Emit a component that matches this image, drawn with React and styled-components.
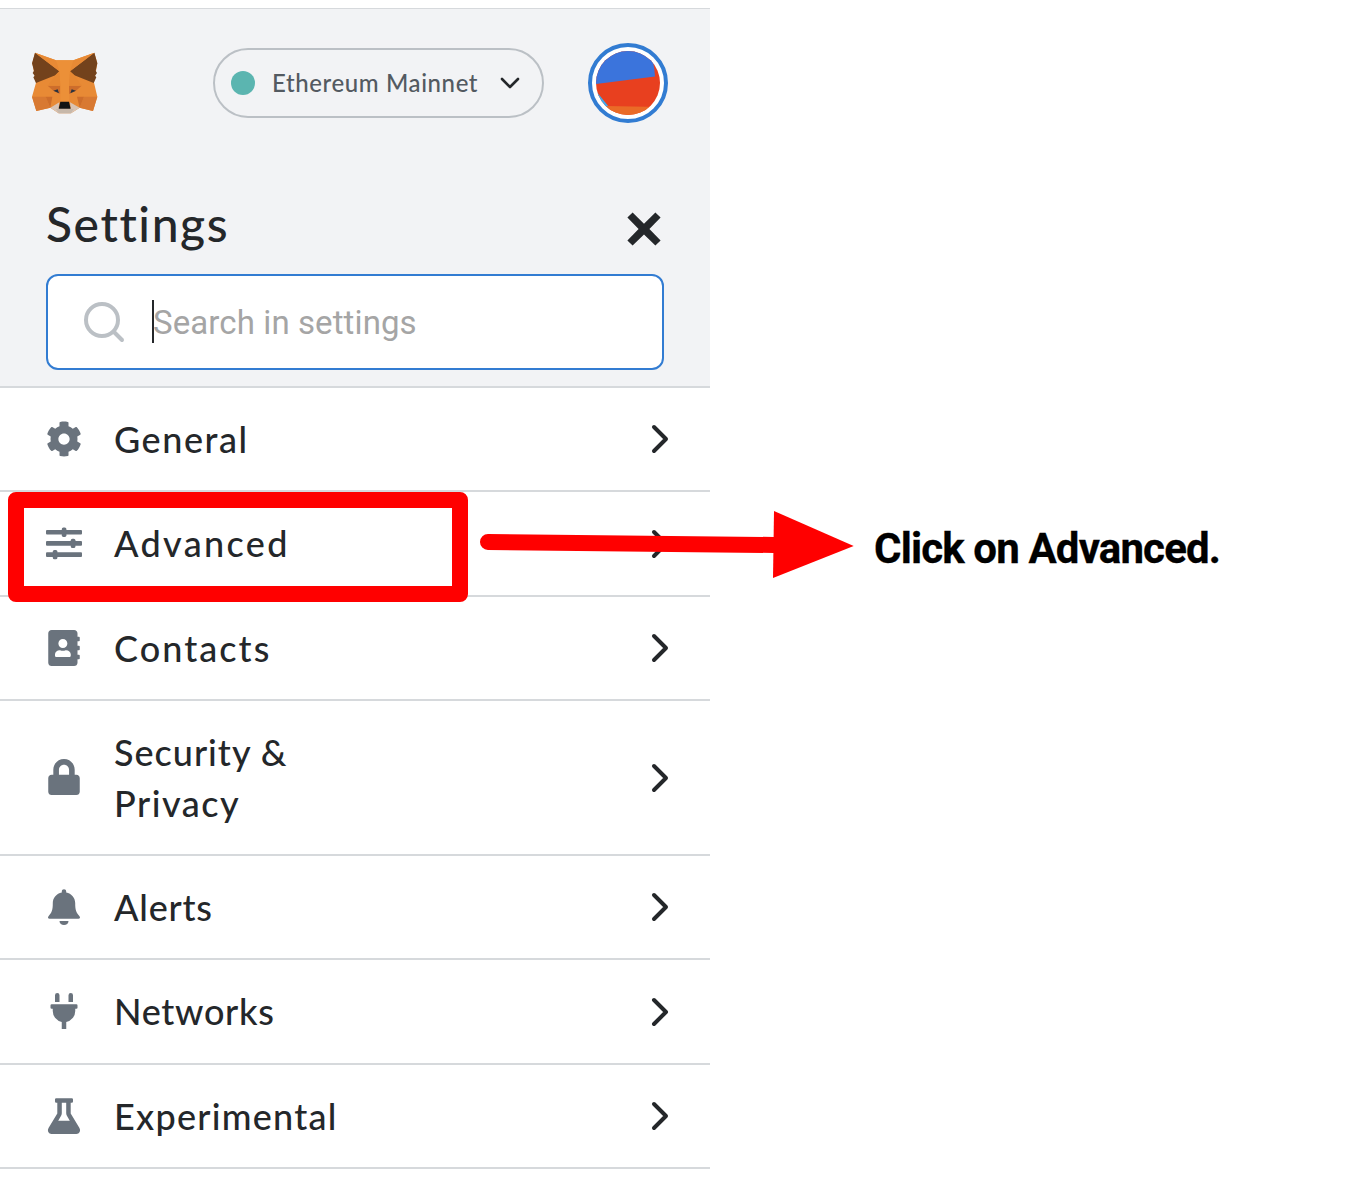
import React from "react";
import styled, { createGlobalStyle } from "styled-components";
import { FaCog, FaAddressBook, FaLock, FaPlug } from "react-icons/fa";

const GlobalStyle = createGlobalStyle`
  * { box-sizing: border-box; }
  body { margin: 0; background: #fff; font-family: Lato, "Open Sans", sans-serif; }
`;

const Page = styled.main`
  position: relative;
  width: 1350px;
  height: 1200px;
  padding-top: 8px;
  display: flex;
  align-items: flex-start;
  overflow: hidden;
`;

const Popup = styled.section`
  width: 710px;
`;

const Top = styled.header`
  height: 380px;
  background: #f2f3f5;
  border-top: 1px solid #d6d9dc;
  border-bottom: 2px solid #d6d9dc;
`;

const AppBar = styled.div`
  height: 148px;
  padding: 0 42px 0 30px;
  display: flex;
  align-items: center;
`;

const FoxLogo = styled.svg`
  display: block;
  margin-bottom: 2px;
`;

const NetworkPill = styled.button`
  width: 331px;
  height: 70px;
  margin: 0 44px 0 113px;
  padding: 0 22px 0 16px;
  display: flex;
  align-items: center;
  border: 2px solid #bbc0c5;
  border-radius: 35px;
  background: transparent;
`;

const Dot = styled.span`
  width: 24px;
  height: 24px;
  border-radius: 50%;
  background: #5bb5b0;
`;

const NetworkName = styled.span`
  flex: 1;
  margin-left: 17px;
  color: #535a61;
  font: 500 24px/34px Lato, sans-serif;
  letter-spacing: 0.6px;
  text-align: left;
  white-space: nowrap;
`;

const Avatar = styled.div`
  width: 80px;
  height: 80px;
  padding: 4px;
  border: 4px solid #327cd2;
  border-radius: 50%;
  background: #fff;
  svg { display: block; border-radius: 50%; }
`;

const TitleRow = styled.div`
  height: 117px;
  padding: 35px 49px 0 46px;
  display: flex;
  justify-content: space-between;
  align-items: flex-start;
`;

const Title = styled.h1`
  margin: 0;
  color: #24272a;
  font: 500 48px/64px Lato, sans-serif;
  letter-spacing: 1.6px;
`;

const CloseIcon = styled.svg`
  display: block;
  margin-top: 20px;
`;

const SearchBox = styled.label`
  height: 96px;
  margin: 0 46px;
  padding-left: 35px;
  display: flex;
  align-items: center;
  border: 2px solid #327cd2;
  border-radius: 12px;
  background: #fff;
`;

const Caret = styled.span`
  width: 2px;
  height: 43px;
  margin: -2px -1px 0 27px;
  background: #24272a;
`;

const Placeholder = styled.span`
  margin-top: 2px;
  color: #a5a5a5;
  font: 400 33px/44px Roboto, sans-serif;
  letter-spacing: 0.1px;
`;

const Row = styled.a`
  height: ${(p) => p.$height}px;
  padding: 0 41px 0 46px;
  display: flex;
  align-items: center;
  border-bottom: 2px solid #d6d9dc;
`;

const IconSlot = styled.span`
  width: 36px;
  height: 36px;
  margin-top: -1px;
  display: flex;
  justify-content: center;
  color: #6a737d;
  svg { display: block; height: 36px; }
`;

const Label = styled.span`
  width: 290px;
  margin-left: 32px;
  color: #24272a;
  font: 500 36px/51px Lato, sans-serif;
`;

const Line = styled.span`
  display: block;
  letter-spacing: ${(p) => p.$spacing}px;
`;

const Chevron = styled.svg`
  display: block;
  margin-left: auto;
`;

const Highlight = styled.div`
  position: absolute;
  left: 8px;
  top: 492px;
  width: 460px;
  height: 110px;
  border: 16px solid #f00;
  border-radius: 8px;
`;

const Arrow = styled.svg`
  position: absolute;
  left: 470px;
  top: 500px;
`;

const Callout = styled.p`
  margin: 511px 0 0 164px;
  color: #000;
  font: 700 42px/60px Roboto, sans-serif;
  letter-spacing: -0.85px;
  -webkit-text-stroke: 0.3px #000;
  white-space: nowrap;
`;

const Fox = () => (
  <FoxLogo width="70" height="63" viewBox="30 33 210 189">
    <path fill="#e88a35" d="M45 38 108 61H160L223 38 232 70 222 128 232 170 219 213 179 203 153 220H116L91 203 49 213 36 170 48 128 37 70Z" />
    <path fill="#73421c" d="M45 38 118 94 106 106 48 129 40 112 44 107 38 99 42 92 36 70Z M223 38 150 94 163 106 221 129 229 112 225 107 231 99 227 92 232 70Z" />
    <path fill="#e88a35" d="M45 38 108 61 118 94Z M223 38 160 61 150 94Z" />
    <path fill="#d87932" d="M36 170 77 170 91 203 49 213Z M232 170 192 170 179 203 219 213Z" />
    <path fill="#cd6d2b" d="M77 170H97L91 203Z M192 170H171L179 203Z M83 137H121V162L100 152Z M185 137H147V162L168 152Z" />
    <path fill="#ec9038" d="M118 94 121 137V186H147V137L150 94 160 61H108Z" />
    <path fill="#e58732" d="M118 94 121 137H83L106 106Z M150 94 147 137H185L163 106Z" />
    <path fill="#d9c4b4" d="M91 203 118 187 116 204 152 205 150 187 179 203 153 220H116Z" />
    <path fill="#c7b8aa" d="M108 207H161L153 220H116Z" />
    <path fill="#2b3440" d="M100 152 113 148 117 160Z M168 152 155 148 151 160Z" />
    <path fill="#101314" d="M121 185H147L152 206H116Z" />
  </FoxLogo>
);

const Sliders = () => (
  <svg width="36" height="36" viewBox="0 0 36 36" fill="currentColor">
    <rect y="5" width="36" height="4.6" rx="1" />
    <rect y="16.1" width="36" height="4.6" rx="1" />
    <rect y="27.3" width="36" height="4.6" rx="1" />
    <rect x="15.8" y="2.5" width="4.6" height="9.4" rx="1.6" />
    <rect x="24.8" y="13.7" width="4.6" height="9.4" rx="1.6" />
    <rect x="6.8" y="24.9" width="4.6" height="9.4" rx="1.6" />
  </svg>
);

const Bell = () => (
  <svg width="36" height="36" viewBox="0 0 36 36" fill="currentColor">
    <path d="M18 .3c-1.2 0-2.2.9-2.2 2.1v1C10.5 4.5 6.8 8.6 6.8 14c0 7-.9 9.5-4.3 13.2-1.1 1.3-.3 2.5 1 2.5h29c1.3 0 2.1-1.2 1-2.5C30.1 23.5 29.2 21 29.2 14c0-5.4-3.7-9.5-9-10.6v-1C20.2 1.2 19.2.3 18 .3Z" />
    <path d="M13.5 32h9c0 2.4-2 4-4.5 4s-4.5-1.6-4.5-4Z" />
  </svg>
);

const Flask = () => (
  <svg width="36" height="36" viewBox="0 0 36 36" fill="currentColor" fillRule="evenodd">
    <path d="M10.2.2H25.8Q27 .2 27 1.4V3.6Q27 4.8 25.8 4.8H24.7V15.5L33.3 29.8C35.2 33 33.3 36 30.4 36H5.6C2.7 36 .8 33 2.7 29.8L11.3 15.5V4.8H10.2Q9 4.8 9 3.6V1.4Q9 .2 10.2.2ZM15.8 4.8V15.2Q15.8 16.6 15.1 17.8L12.2 22.8H23.8L20.9 17.8Q20.2 16.6 20.2 15.2V4.8Z" />
  </svg>
);

const items = [
  { lines: [["General", 1.55]], icon: FaCog, height: 104 },
  { lines: [["Advanced", 2.35]], icon: Sliders, height: 105 },
  { lines: [["Contacts", 2.05]], icon: FaAddressBook, height: 104 },
  { lines: [["Security &", 1], ["Privacy", 1.5]], icon: FaLock, height: 155 },
  { lines: [["Alerts", 0.8]], icon: Bell, height: 104 },
  { lines: [["Networks", 0.7]], icon: FaPlug, height: 105 },
  { lines: [["Experimental", 1.25]], icon: Flask, height: 104 },
];

export default function App() {
  return (
    <Page>
      <GlobalStyle />
      <Popup>
        <Top>
          <AppBar>
            <Fox />
            <NetworkPill>
              <Dot />
              <NetworkName>Ethereum Mainnet</NetworkName>
              <svg width="20" height="12" viewBox="0 0 20 12" fill="none" stroke="#24272a" strokeWidth="2.6" strokeLinecap="round" strokeLinejoin="round">
                <path d="M2 2 10 10 18 2" />
              </svg>
            </NetworkPill>
            <Avatar>
              <svg width="64" height="64" viewBox="0 0 64 64">
                <rect width="64" height="64" fill="#e8401f" />
                <path fill="#3b74dc" d="M0 0H54Q58 10 59 25.5L0 33Z" />
                <path fill="#3fa9ee" d="M0 40 13 56V64H0Z" />
                <path fill="#ea6b27" d="M10 55 64 56V64H16Z" />
              </svg>
            </Avatar>
          </AppBar>
          <TitleRow>
            <Title>Settings</Title>
            <CloseIcon width="34" height="34" viewBox="0 0 34 34">
              <path fill="#24272a" d="M5.6.6 17 11.7 28.4.6 33.6 5.6 22.4 17 33.6 28.4 28.4 33.6 17 22.4 5.6 33.6.4 28.4 11.6 17 .4 5.6Z" />
            </CloseIcon>
          </TitleRow>
          <SearchBox>
            <svg width="42" height="42" viewBox="0 0 42 42" fill="none" stroke="#bbc0c5" strokeWidth="4" strokeLinecap="round">
              <circle cx="19" cy="19" r="16" />
              <path d="M31 31 39 39" />
            </svg>
            <Caret />
            <Placeholder>Search in settings</Placeholder>
          </SearchBox>
        </Top>
        <nav>
          {items.map(({ lines, icon: Icon, height }) => (
            <Row key={lines[0][0]} $height={height}>
              <IconSlot>
                <Icon size={36} />
              </IconSlot>
              <Label>
                {lines.map(([text, spacing]) => (
                  <Line key={text} $spacing={spacing}>{text}</Line>
                ))}
              </Label>
              <Chevron width="18" height="30" viewBox="0 0 18 30" fill="none" stroke="#24272a" strokeWidth="4" strokeLinecap="round" strokeLinejoin="round">
                <path d="M3 3 15 15 3 27" />
              </Chevron>
            </Row>
          ))}
        </nav>
      </Popup>
      <Callout>Click on Advanced.</Callout>
      <Highlight />
      <Arrow width="390" height="90" viewBox="470 500 390 90">
        <path d="M488 542 774 545" stroke="#f00" strokeWidth="16" strokeLinecap="round" />
        <path fill="#f00" d="M774 511 853.7 546 773 578Z" />
      </Arrow>
    </Page>
  );
}
